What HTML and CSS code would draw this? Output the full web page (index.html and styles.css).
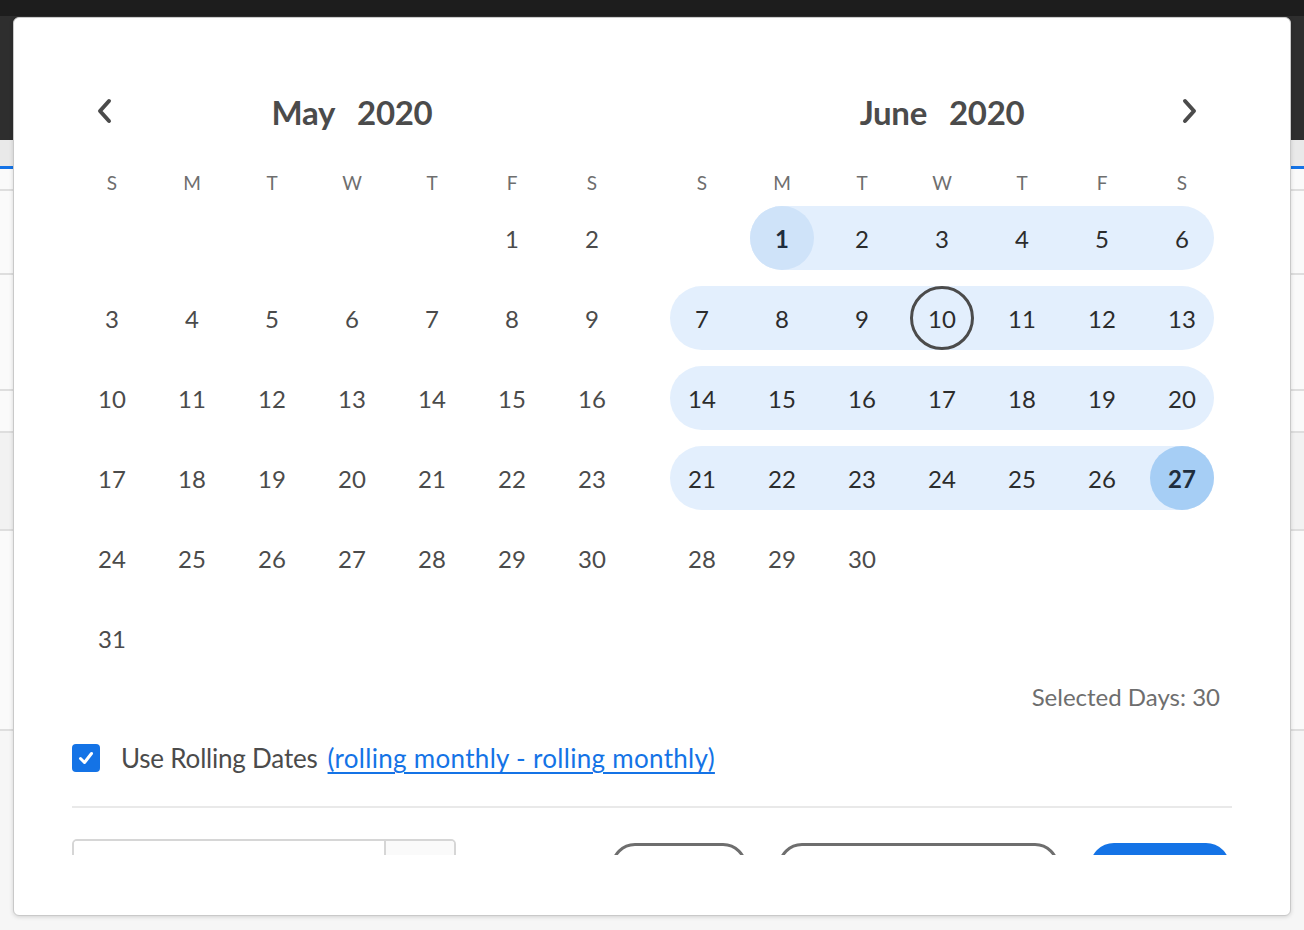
FILE: index.html
```html
<!DOCTYPE html>
<html lang="en">
<head>
<meta charset="utf-8">
<title>Date Range</title>
<link rel="stylesheet" href="styles.css">
</head>
<body>
<div class="app">
  <div class="app-topbar"></div>
  <div class="app-header"></div>
  <div class="app-tabs"></div>
  <div class="app-tabline"></div>
  <div class="app-row r1"></div>
  <div class="app-row r2"></div>
  <div class="app-row r3"></div>
  <div class="app-row r4"></div>
  <div class="app-row r5 shaded"></div>
  <div class="app-row r6"></div>
</div>

<div class="modal">
  <div class="modal-body">
    <div class="calendars">
      <section class="month">
        <div class="month-head">
          <button class="nav prev" aria-label="Previous month">
            <svg width="18" height="26" viewBox="0 0 18 26"><path d="M14 3 L5 13 L14 23" fill="none" stroke="#4b4b4b" stroke-width="4" stroke-linecap="round" stroke-linejoin="round"/></svg>
          </button>
          <h2 class="month-title"><span>May</span><span>2020</span></h2>
        </div>
        <div class="grid">
          <div class="dow">S</div><div class="dow">M</div><div class="dow">T</div><div class="dow">W</div><div class="dow">T</div><div class="dow">F</div><div class="dow">S</div>
          <div class="day empty"></div><div class="day empty"></div><div class="day empty"></div><div class="day empty"></div><div class="day empty"></div>
          <div class="day"><span class="num">1</span></div><div class="day"><span class="num">2</span></div>
          <div class="day"><span class="num">3</span></div><div class="day"><span class="num">4</span></div><div class="day"><span class="num">5</span></div><div class="day"><span class="num">6</span></div><div class="day"><span class="num">7</span></div><div class="day"><span class="num">8</span></div><div class="day"><span class="num">9</span></div>
          <div class="day"><span class="num">10</span></div><div class="day"><span class="num">11</span></div><div class="day"><span class="num">12</span></div><div class="day"><span class="num">13</span></div><div class="day"><span class="num">14</span></div><div class="day"><span class="num">15</span></div><div class="day"><span class="num">16</span></div>
          <div class="day"><span class="num">17</span></div><div class="day"><span class="num">18</span></div><div class="day"><span class="num">19</span></div><div class="day"><span class="num">20</span></div><div class="day"><span class="num">21</span></div><div class="day"><span class="num">22</span></div><div class="day"><span class="num">23</span></div>
          <div class="day"><span class="num">24</span></div><div class="day"><span class="num">25</span></div><div class="day"><span class="num">26</span></div><div class="day"><span class="num">27</span></div><div class="day"><span class="num">28</span></div><div class="day"><span class="num">29</span></div><div class="day"><span class="num">30</span></div>
          <div class="day"><span class="num">31</span></div>
        </div>
      </section>

      <section class="month">
        <div class="month-head">
          <h2 class="month-title"><span>June</span><span>2020</span></h2>
          <button class="nav next" aria-label="Next month">
            <svg width="18" height="26" viewBox="0 0 18 26"><path d="M4 3 L13 13 L4 23" fill="none" stroke="#4b4b4b" stroke-width="4" stroke-linecap="round" stroke-linejoin="round"/></svg>
          </button>
        </div>
        <div class="grid">
          <div class="dow">S</div><div class="dow">M</div><div class="dow">T</div><div class="dow">W</div><div class="dow">T</div><div class="dow">F</div><div class="dow">S</div>
          <div class="day empty"></div>
          <div class="day sel start"><span class="num">1</span></div><div class="day sel"><span class="num">2</span></div><div class="day sel"><span class="num">3</span></div><div class="day sel"><span class="num">4</span></div><div class="day sel"><span class="num">5</span></div><div class="day sel row-end"><span class="num">6</span></div>
          <div class="day sel row-start"><span class="num">7</span></div><div class="day sel"><span class="num">8</span></div><div class="day sel"><span class="num">9</span></div><div class="day sel today"><span class="num">10</span></div><div class="day sel"><span class="num">11</span></div><div class="day sel"><span class="num">12</span></div><div class="day sel row-end"><span class="num">13</span></div>
          <div class="day sel row-start"><span class="num">14</span></div><div class="day sel"><span class="num">15</span></div><div class="day sel"><span class="num">16</span></div><div class="day sel"><span class="num">17</span></div><div class="day sel"><span class="num">18</span></div><div class="day sel"><span class="num">19</span></div><div class="day sel row-end"><span class="num">20</span></div>
          <div class="day sel row-start"><span class="num">21</span></div><div class="day sel"><span class="num">22</span></div><div class="day sel"><span class="num">23</span></div><div class="day sel"><span class="num">24</span></div><div class="day sel"><span class="num">25</span></div><div class="day sel"><span class="num">26</span></div><div class="day sel end row-end"><span class="num">27</span></div>
          <div class="day"><span class="num">28</span></div><div class="day"><span class="num">29</span></div><div class="day"><span class="num">30</span></div>
        </div>
      </section>
    </div>

    <div class="selected-days">Selected Days: 30</div>

    <div class="rolling">
      <span class="checkbox">
        <svg width="18" height="18" viewBox="0 0 18 18"><path d="M3.5 9.5 L7.5 13.5 L14.5 4.5" fill="none" stroke="#fff" stroke-width="3" stroke-linecap="round" stroke-linejoin="round"/></svg>
      </span>
      <span class="rolling-label">Use Rolling Dates</span>
      <a class="rolling-link" href="#">(rolling monthly - rolling monthly)</a>
    </div>

    <div class="divider"></div>

    <div class="footer">
      <div class="input-group">
        <div class="input-field"></div>
        <div class="input-btn"></div>
      </div>
      <div class="actions">
        <button class="btn outline small"></button>
        <button class="btn outline wide"></button>
        <button class="btn primary"></button>
      </div>
    </div>
  </div>
</div>
</body>
</html>
```

FILE: styles.css
```css
* { box-sizing: border-box; }

html, body {
  margin: 0;
  padding: 0;
  width: 1304px;
  height: 930px;
  overflow: hidden;
  font-family: Lato, "Open Sans", "Liberation Sans", sans-serif;
  background: #f6f6f6;
}

/* ---------- background application ---------- */
.app { width: 1304px; }
.app-topbar { height: 16px; background: #1d1d1d; }
.app-header { height: 124px; background: #2e2e2e; }
.app-tabs { height: 26px; background: #e9e9e9; }
.app-tabline { height: 3px; background: #1473e6; }
.app-row { background: #fafafa; border-bottom: 2px solid #dedede; }
.app-row.r1 { height: 22px; }
.app-row.r2 { height: 84px; }
.app-row.r3 { height: 116px; }
.app-row.r4 { height: 42px; }
.app-row.r5 { height: 98px; background: #f2f2f2; }
.app-row.r6 { height: 200px; }

/* ---------- modal ---------- */
.modal {
  position: absolute;
  left: 13px;
  top: 17px;
  width: 1278px;
  height: 899px;
  background: #fff;
  border: 1px solid #c9c9c9;
  border-radius: 6px;
  box-shadow: 0 1px 4px rgba(0,0,0,0.15);
  padding-bottom: 60px;
}

.modal-body {
  height: 837px;
  overflow: hidden;
  padding: 66px 58px 0 58px;
  color: #4b4b4b;
}

.calendars {
  display: flex;
  gap: 30px;
  width: 1150px;
}

.month { width: 560px; }

.month-head {
  height: 56px;
  display: flex;
  align-items: center;
  justify-content: center;
  position: relative;
}

.month-title {
  margin: 0;
  font-size: 33px;
  font-weight: 700;
  color: #4b4b4b;
  display: flex;
  gap: 22px;
  letter-spacing: -0.3px;
}

.nav {
  position: absolute;
  top: 14px;
  border: 0;
  background: none;
  padding: 0;
  width: 18px;
  height: 26px;
  display: block;
}
.nav svg { display: block; }
.nav.prev { left: 23px; }
.nav.next { right: 23px; }

.grid {
  display: grid;
  grid-template-columns: repeat(7, 80px);
  grid-auto-rows: 80px;
  grid-template-rows: 58px;
}

.dow {
  display: flex;
  align-items: flex-end;
  justify-content: center;
  padding-bottom: 4px;
  font-size: 19px;
  color: #6e6e6e;
}

.day {
  position: relative;
  display: flex;
  align-items: center;
  justify-content: center;
}

.day .num {
  position: relative;
  z-index: 1;
  width: 64px;
  height: 64px;
  border-radius: 50%;
  display: flex;
  align-items: center;
  justify-content: center;
  font-size: 24px;
  color: #4b4b4b;
}

.day.sel::before {
  content: "";
  position: absolute;
  top: 8px;
  bottom: 8px;
  left: 0;
  right: 0;
  background: #e3effd;
}
.day.sel .num { color: #2c2c2c; }

.day.row-start::before,
.day.start::before {
  left: 8px;
  border-top-left-radius: 32px;
  border-bottom-left-radius: 32px;
}
.day.row-end::before,
.day.end::before {
  right: 8px;
  border-top-right-radius: 32px;
  border-bottom-right-radius: 32px;
}

.day.start .num {
  background: #cfe3f9;
  font-weight: 700;
  color: #1f2d3d;
}
.day.end .num {
  background: #a6cef5;
  font-weight: 700;
  color: #1f2d3d;
}
.day.today .num {
  border: 3px solid #4b4b4b;
}

/* ---------- selected days ---------- */
.selected-days {
  width: 1148px;
  text-align: right;
  font-size: 24px;
  color: #6e6e6e;
  margin-top: 4px;
  line-height: 30px;
}

/* ---------- rolling row ---------- */
.rolling {
  display: flex;
  align-items: center;
  height: 40px;
  margin-top: 26px;
  font-size: 26px;
}

.checkbox {
  width: 28px;
  height: 28px;
  border-radius: 4px;
  background: #1473e6;
  display: flex;
  align-items: center;
  justify-content: center;
  margin-right: 21px;
}
.checkbox svg { display: block; }

.rolling-label {
  color: #4b4b4b;
  margin-right: 10px;
  letter-spacing: -0.2px;
}

.rolling-link {
  color: #1473e6;
  text-decoration: underline;
  text-underline-offset: 4px;
  letter-spacing: 0.3px;
}

.divider {
  height: 2px;
  background: #e9e9e9;
  margin-top: 28px;
}

/* ---------- footer ---------- */
.footer {
  display: flex;
  justify-content: space-between;
  align-items: flex-start;
  margin-top: 31px;
}

.input-group {
  display: flex;
  width: 384px;
  height: 56px;
  border: 2px solid #d6d6d6;
  border-radius: 5px;
  overflow: hidden;
}
.input-field { flex: 1; background: #fff; }
.input-btn {
  width: 70px;
  border-left: 2px solid #d6d6d6;
  background: #fafafa;
}

.actions {
  display: flex;
  gap: 31px;
  margin-top: 4px;
  margin-right: 2px;
}

.btn {
  height: 48px;
  border-radius: 24px;
  padding: 0;
  font: inherit;
}
.btn.outline {
  background: #fff;
  border: 3px solid #6e6e6e;
}
.btn.small { width: 136px; }
.btn.wide { width: 281px; }
.btn.primary {
  width: 140px;
  background: #1473e6;
  border: 0;
}
```
